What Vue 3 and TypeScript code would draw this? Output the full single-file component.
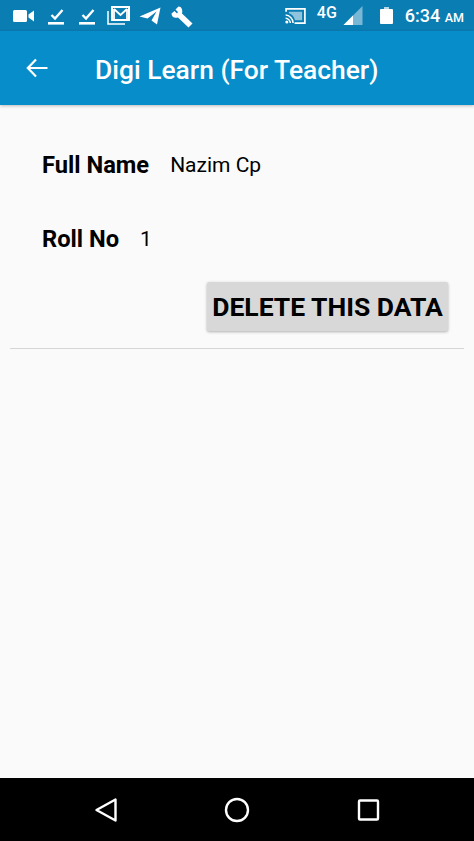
<script setup lang="ts">
const title = 'Digi Learn (For Teacher)'
const rows = [
  { label: 'Full Name', value: 'Nazim Cp' },
  { label: 'Roll No', value: '1' },
]
</script>

<template>
  <div class="screen">
    <div class="status-bar">
      <div class="status-left">
        <svg class="ic" width="21" height="14" viewBox="0 0 21 14"><rect x="0" y="1" width="14" height="12" rx="1.5" fill="#fff"/><path d="M15.500 5.500 21 1.500V12.500L15.500 8.500Z" fill="#fff"/></svg>
        <svg class="ic tick" width="16" height="18" viewBox="0 0 16 18"><path d="M3.500 8 7 11.500 14.500 3" fill="none" stroke="#fff" stroke-width="2.400"/><rect x="0" y="15" width="16" height="2.600" fill="#fff"/></svg>
        <svg class="ic tick2" width="16" height="18" viewBox="0 0 16 18"><path d="M3.500 8 7 11.500 14.500 3" fill="none" stroke="#fff" stroke-width="2.400"/><rect x="0" y="15" width="16" height="2.600" fill="#fff"/></svg>
        <svg class="ic mail" width="23" height="19" viewBox="0 0 23 19"><path d="M1 5V18H18" fill="none" stroke="#fff" stroke-width="1.500"/><rect x="5" y="1" width="17" height="13" fill="none" stroke="#fff" stroke-width="2"/><path d="M7 3V13M20 3V13M7 3 13.500 9 20 3" fill="none" stroke="#fff" stroke-width="1.800"/></svg>
        <svg class="ic plane" width="22" height="18" viewBox="0 0 21 18"><path d="M0 9.500 21 0.500 17.500 17.500 12 13.500 17 4.500 8 11.500Z" fill="#fff"/></svg>
        <svg class="ic wrench" width="22" height="22" viewBox="0 0 22 22"><path d="M7.500 0.500 4.500 3.500 7 6 6 7.500 3.500 5 0.500 7.500C0.500 11 3.500 12.500 7 11.500L17.500 21.500 21.500 17.500 11 7.500C12 4 10.500 0.500 7.500 0.500Z" fill="#fff"/></svg>
      </div>
      <div class="status-right">
        <svg class="cast" width="21" height="16" viewBox="0 0 22 17"><path d="M1 4V1H21V16H10" fill="none" stroke="#fff" stroke-width="1.800"/><path d="M4 4H18V13H10.500C9.500 9 7.500 6.500 4 5.500Z" fill="#fff" opacity=".55"/><path d="M0.500 7.500C4.500 7.500 8.500 11.500 8.500 16M0.500 11C3 11 5.500 13.500 5.500 16" fill="none" stroke="#fff" stroke-width="1.600"/><circle cx="1.800" cy="15" r="1.600" fill="#fff"/></svg>
        <span class="net">4G</span>
        <svg class="signal" width="20" height="19" viewBox="0 0 20 20"><path d="M0 20 20 0V20Z" fill="#fff" opacity=".45"/><path d="M0 20 10 10V20Z" fill="#fff"/></svg>
        <svg class="battery" width="13" height="17" viewBox="0 0 13 17"><rect x="4" y="0" width="5" height="2" fill="#fff" opacity=".7"/><rect x="0" y="2" width="13" height="15" rx="1" fill="#fff"/></svg>
        <span class="time">6:34 <small>AM</small></span>
      </div>
    </div>

    <header class="toolbar">
      <svg class="back" width="24" height="24" viewBox="0 0 24 24"><path d="M22.500 12H3M11 3.500 2.800 12 11 20.500" fill="none" stroke="#fff" stroke-width="2.200"/></svg>
      <h1>{{ title }}</h1>
    </header>

    <main class="content">
      <div v-for="row in rows" :key="row.label" class="row">
        <span class="label">{{ row.label }}</span>
        <span class="value">{{ row.value }}</span>
      </div>
      <div class="actions">
        <button class="delete" type="button">DELETE THIS DATA</button>
      </div>
      <div class="divider"></div>
    </main>

    <nav class="nav-bar">
      <svg width="24" height="26" viewBox="0 0 24 26"><path d="M21.500 2.500V23.500L2.500 13Z" fill="none" stroke="#fff" stroke-width="2.400" stroke-linejoin="round"/></svg>
      <svg width="26" height="26" viewBox="0 0 26 26"><circle cx="13" cy="13" r="11" fill="none" stroke="#fff" stroke-width="2.400"/></svg>
      <svg width="24" height="24" viewBox="0 0 24 24"><rect x="3" y="2.500" width="19" height="19" rx="1" fill="none" stroke="#fff" stroke-width="2.400"/></svg>
    </nav>
  </div>
</template>

<style>
html,
body {
  margin: 0;
  background: #fafafa;
}
</style>

<style scoped>
.screen {
  width: 474px;
  height: 841px;
  display: flex;
  flex-direction: column;
  overflow: hidden;
  background: #fafafa;
  font-family: Roboto, "Liberation Sans", sans-serif;
}

.status-bar {
  height: 31px;
  flex: none;
  display: flex;
  justify-content: space-between;
  background: #0a7db3;
  color: #fff;
}

.status-left {
  display: flex;
  align-items: flex-start;
  padding: 9px 0 0 13px;
}

.ic {
  flex: none;
}

.tick {
  margin: -2px 0 0 14px;
}

.tick2 {
  margin: -2px 0 0 15px;
}

.mail {
  margin: -3px 0 0 12px;
}

.plane {
  margin: -2px 0 0 9px;
}

.wrench {
  margin: -3px 0 0 10px;
}

.status-right {
  display: flex;
  align-items: flex-start;
  padding-right: 10px;
}

.cast {
  margin-top: 8px;
}

.net {
  margin: 3px 0 0 11px;
  font-size: 16px;
  font-weight: 500;
}

.signal {
  margin: 6px 0 0 6px;
}

.battery {
  margin: 7px 0 0 17px;
}

.time {
  margin: 5px 0 0 12px;
  font-size: 18px;
  font-weight: 500;
}

.time small {
  font-size: 12.500px;
}

.toolbar {
  height: 74px;
  flex: none;
  display: flex;
  align-items: center;
  padding-left: 25px;
  background: #078dc9;
  box-shadow: 0 1px 3px rgba(0, 0, 0, 0.25);
  position: relative;
}

.back {
  flex: none;
}

.toolbar h1 {
  margin: 3px 0 0 46px;
  font-size: 26.400px;
  font-weight: 500;
  color: #fff;
}

.content {
  flex: 1;
  padding: 43px 10px 0;
}

.row {
  display: flex;
  align-items: center;
  height: 34px;
  margin-bottom: 40px;
  padding-left: 32px;
  color: #000;
}

.label {
  font-size: 23.700px;
  font-weight: 700;
}

.value {
  margin-left: 21px;
  font-size: 21px;
}

.actions {
  display: flex;
  justify-content: flex-end;
  margin-top: -14px;
  padding-right: 16px;
}

.delete {
  width: 241px;
  height: 49px;
  padding: 0;
  border: none;
  border-radius: 2px;
  background: #d8d8d8;
  box-shadow: 0 1px 3px rgba(0, 0, 0, 0.3);
  font-family: inherit;
  font-size: 26.500px;
  font-weight: 700;
  color: #000;
  white-space: nowrap;
}

.divider {
  height: 1px;
  margin-top: 17px;
  background: #d6d6d6;
}

.nav-bar {
  height: 63px;
  flex: none;
  display: flex;
  align-items: center;
  justify-content: space-between;
  padding: 0 94px;
  background: #000;
}
</style>
